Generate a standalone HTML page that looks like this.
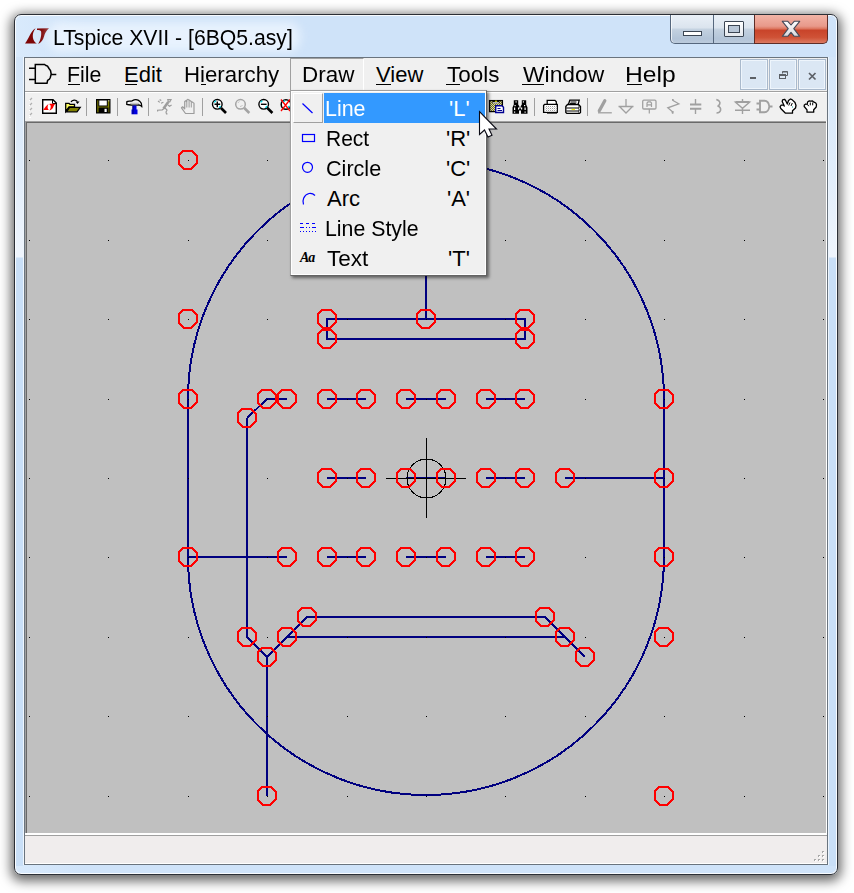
<!DOCTYPE html>
<html><head><meta charset="utf-8">
<style>
*{margin:0;padding:0;box-sizing:border-box}
html,body{width:854px;height:893px;overflow:hidden;background:#fff;font-family:"Liberation Sans",sans-serif}
.abs{position:absolute}
.t{position:absolute;font-size:22px;line-height:22px;color:#000;white-space:pre;transform-origin:0 0}
#win{position:absolute;left:14px;top:14px;width:824px;height:861px;border:1px solid #2b2f36;border-radius:7px;
 background:linear-gradient(90deg,#d9eafc 0,#cfe3f9 70px,#cfe3f9 100%);
 box-shadow:0 3px 12px 3px rgba(0,0,0,.6), inset 0 0 0 1px rgba(255,255,255,.85)}
#client{position:absolute;left:24px;top:57px;width:804px;height:808px;border:1px solid #6a747e;background:#f0f0f0}
.u{position:absolute;height:1px;background:#000}
#canvas{position:absolute;left:25px;top:121px;width:801px;height:712px;background:#c0c0c0;border-left:1px solid #a0a0a0;border-top:1px solid #a0a0a0;box-shadow:inset 1px 1px 0 #696969}
#status{position:absolute;left:25px;top:835px;width:802px;height:29px;background:#f0eded;border-top:1px solid #a0a0a0;border-bottom:1px solid #fff}
#dd{position:absolute;left:290px;top:90px;width:197px;height:185px;background:#f0f0f0;border:1px solid #979797;box-shadow:3px 3px 3px rgba(0,0,0,.35)}
</style></head><body>

<div id="win"></div>
<div class="abs" style="left:16px;top:57px;width:7px;height:809px;background:linear-gradient(#d3e5f9 0,#e2eefb 120px,#eff5fd 200px,#c9dff7 201px,#c9dff7 100%)"></div><div class="abs" style="left:829px;top:57px;width:7px;height:809px;background:linear-gradient(#d3e5f9 0,#e2eefb 120px,#eff5fd 200px,#c9dff7 201px,#c9dff7 100%)"></div><div class="abs" style="left:23px;top:57px;width:1px;height:808px;background:#fff;opacity:.6"></div><div class="abs" style="left:828px;top:57px;width:1px;height:808px;background:#fff;opacity:.6"></div>
<svg class="abs" style="left:0;top:0" width="60" height="60" viewBox="0 0 60 60">
<path d="M35.6 28.2 C30.5 31 28.5 39.5 25 43.4 L36.8 43.4 C32.5 41.5 31 34 35.6 28.2Z" fill="#7e0606"/>
<path d="M37 28.5 L49 28.2 C46.5 30.5 44.8 33 44.2 36 C43.2 40 41 42.5 38.2 43.9 C40.8 40 41.6 34.5 41.1 31.5 C40.7 30.2 39 30 37 30Z" fill="#7e0606"/>
</svg>
<div class="abs" style="left:48px;top:22px;width:252px;height:30px;background:rgba(240,247,255,.75);filter:blur(5px);border-radius:12px"></div>
<div class="t" style="left:53.1px;top:27px;transform:scaleX(0.963)">LTspice XVII - [6BQ5.asy]</div>
<div class="abs" style="left:670px;top:15px;width:85px;height:29px;border:1px solid #56677d;border-top:none;border-radius:0 0 0 5px;background:linear-gradient(#eaf0f7 0,#dbe4ee 45%,#c3d1e0 52%,#b3c4d8 85%,#bccbdc 100%);box-shadow:inset 1px 0 0 rgba(255,255,255,.7)"></div>
<div class="abs" style="left:713px;top:15px;width:1px;height:28px;background:#56677d"></div>
<div class="abs" style="left:754px;top:15px;width:74px;height:29px;border:1px solid #5e2d27;border-top:none;border-radius:0 0 5px 0;background:linear-gradient(#f2b4a6 0,#e8998a 40%,#de7a64 48%,#c9442a 55%,#cf5236 80%,#dc7a62 100%)"></div>
<div class="abs" style="left:683px;top:31px;width:19px;height:5px;background:#fff;border:1px solid #3b4553"></div>
<div class="abs" style="left:724px;top:21px;width:20px;height:16px;border:1px solid #3b4553;border-radius:1px;background:linear-gradient(#fff,#e4e8ee)"></div>
<div class="abs" style="left:728px;top:25px;width:12px;height:8px;border:1px solid #3b4553;background:#b9c7d8"></div>
<svg class="abs" style="left:770px;top:10px" width="40" height="40" viewBox="770 10 40 40"><defs><linearGradient id="xg" x1="0" y1="0" x2="0" y2="1"><stop offset="0" stop-color="#ffffff"/><stop offset="1" stop-color="#d8d8dc"/></linearGradient></defs><path d="M782.3 21.3 H787.8 L791 25 L794.2 21.3 H799.7 L793.8 28.7 L799.7 36.3 H794.2 L791 32.4 L787.8 36.3 H782.3 L788.2 28.7 Z" fill="url(#xg)" stroke="#454a58" stroke-width="1.1" stroke-linejoin="round"/></svg>
<div id="client"></div>
<svg class="abs" style="left:0;top:50px" width="60" height="40" viewBox="0 50 60 40"><path d="M29 68.3 H35 M29 79.4 H35 M35.3 64.5 H44.5 L46 65.5 L47.5 66 L49 68.5 L50.5 70.5 L51.2 74 L50.3 77.5 L49.5 79 L47.6 80.5 L47 83.3 H35.3 Z M51.2 74.5 H56.3" fill="#f0f0f0" stroke="#000" stroke-width="1.5"/></svg>
<div class="abs" style="left:290px;top:58px;width:74px;height:33px;border-left:1px solid #a0a0a0;border-top:1px solid #a0a0a0;border-right:1px solid #fff"></div>
<div class="t" style="left:67.1px;top:64px;transform:scaleX(0.970)">File</div>
<div class="u" style="left:68px;top:84px;width:12px"></div>
<div class="t" style="left:124px;top:64px;transform:scaleX(1.0)">Edit</div>
<div class="u" style="left:125px;top:84px;width:12px"></div>
<div class="t" style="left:184px;top:64px;transform:scaleX(1.011)">Hierarchy</div>
<div class="u" style="left:201px;top:84px;width:5px"></div>
<div class="t" style="left:302px;top:64px;transform:scaleX(1.02)">Draw</div>
<div class="t" style="left:376px;top:64px;transform:scaleX(1.0)">View</div>
<div class="u" style="left:376px;top:84px;width:15px"></div>
<div class="t" style="left:447px;top:64px;transform:scaleX(1.02)">Tools</div>
<div class="u" style="left:446px;top:84px;width:14px"></div>
<div class="t" style="left:523px;top:64px;transform:scaleX(1.038)">Window</div>
<div class="u" style="left:522px;top:84px;width:22px"></div>
<div class="t" style="left:624.8px;top:64px;transform:scaleX(1.119)">Help</div>
<div class="u" style="left:627px;top:84px;width:15px"></div>
<div class="abs" style="left:740px;top:59px;width:28px;height:31px;background:#dbe7f4;border:1px solid #a9b9cc;box-shadow:inset 1px 1px 0 #eef5fc,inset -1px -1px 0 #eef5fc"></div>
<div class="abs" style="left:769px;top:59px;width:28px;height:31px;background:#dbe7f4;border:1px solid #a9b9cc;box-shadow:inset 1px 1px 0 #eef5fc,inset -1px -1px 0 #eef5fc"></div>
<div class="abs" style="left:798px;top:59px;width:28px;height:31px;background:#dbe7f4;border:1px solid #a9b9cc;box-shadow:inset 1px 1px 0 #eef5fc,inset -1px -1px 0 #eef5fc"></div>
<div class="abs" style="left:750px;top:77px;width:6px;height:2px;background:#5c6066"></div>
<svg class="abs" style="left:778px;top:70px" width="12" height="10"><path d="M4.5 3.5V1.5H9.5V5.5H7.5" fill="none" stroke="#5c6066"/><path d="M4.5 2H9.5" stroke="#5c6066"/><rect x="1.5" y="4.5" width="6" height="4" fill="none" stroke="#5c6066"/><path d="M2 5.5H7" stroke="#5c6066"/></svg>
<svg class="abs" style="left:807px;top:71px" width="10" height="10"><path d="M2 2 L8.5 8.5 M8.5 2 L2 8.5" stroke="#5c6066" stroke-width="1.7"/></svg>
<div class="abs" style="left:25px;top:91px;width:802px;height:1px;background:#a0a0a0"></div>
<div class="abs" style="left:25px;top:92px;width:802px;height:1px;background:#fff"></div>
<svg class="abs" style="left:0;top:0" width="854" height="125" viewBox="0 0 854 125">
<g stroke="#b0b0b0" stroke-width="1.2" fill="none"><path d="M30 100 L32 98 M30 105 L32 103 M30 110 L32 108 M30 115 L32 113"/></g>
<g stroke="#fff" stroke-width="1" fill="none"><path d="M29 100.5 H30 M29 105.5 H30 M29 110.5 H30 M29 115.5 H30 M29 117.5 H31"/></g>
<!-- new doc -->
<path d="M42.7 99.7 H53 L56.3 103 V113.3 H42.7 Z" fill="#fff" stroke="#000" stroke-width="1.4"/>
<path d="M52.5 100 V103.5 H56" fill="none" stroke="#000" stroke-width="1"/>
<path d="M48.6 103.8 C46.8 105 45.2 107.5 43.2 110 H48.8 C47.3 108.8 47.2 106 48.6 103.8 Z" fill="#ff0000"/>
<path d="M49.6 103.8 H55.6 C54.2 104.8 53.6 106 53.1 107.5 C52.5 109 51.2 110 49.4 110.4 C50.6 109 51 107 50.6 105.5 C50.4 105 50.1 104.8 49.6 104.8 Z" fill="#ff0000"/>
<!-- open folder -->
<path d="M71 102 C72 99.5 76 99.5 77.5 101.5" fill="none" stroke="#000" stroke-width="1.2"/>
<path d="M75.5 101.5 H79.5 L77.5 104 Z" fill="#000"/>
<path d="M65.7 103.3 H69 L70 104.3 H74.5 V107 H69 L65.7 111.5 Z" fill="#ffff60" stroke="#000" stroke-width="1.3"/>
<path d="M66.5 111.8 L69.5 107.3 H80.2 L77 111.8 Z" fill="#808000" stroke="#000" stroke-width="1.3"/>
<!-- save -->
<rect x="96" y="99" width="14.5" height="14.5" fill="#000"/>
<rect x="97.3" y="100.3" width="12" height="12" fill="#808000"/>
<rect x="98.8" y="100" width="8.5" height="6" fill="#fff" stroke="#000" stroke-width="1"/>
<rect x="98.5" y="107.5" width="10" height="5.5" fill="#000"/>
<rect x="104.5" y="108.8" width="2.2" height="3.2" fill="#fff"/>
<rect x="108.3" y="100.3" width="1" height="1" fill="#fff"/>
<!-- separators -->
<g fill="#a0a0a0"><rect x="86" y="98" width="1" height="18"/><rect x="117" y="98" width="1" height="18"/><rect x="148" y="98" width="1" height="18"/><rect x="202" y="98" width="1" height="18"/><rect x="534" y="98" width="1" height="18"/><rect x="587" y="98" width="1" height="18"/></g>
<!-- hammer -->
<path d="M126.8 101.8 C128 100.5 130 101.5 132 100.8 C134.5 99.5 138 99.5 140 101.5 C141.8 103 142 105 141.8 106.5 C140.5 105 139 104.8 137.5 105.2 H131.5 C130 104.5 128 105 126.8 104.5 Z" fill="#f4f4f4" stroke="#000" stroke-width="1.3"/>
<path d="M130 103.3 H139" stroke="#b8b8b8" stroke-width="1"/>
<rect x="132.5" y="105.5" width="4" height="5" fill="#0000e0"/>
<rect x="131.5" y="109.5" width="6" height="4.8" fill="#0000e0"/>
<path d="M133 106 V114" stroke="#00007a" stroke-width="1"/>
<!-- running man grey -->
<g fill="none" stroke="#9c9c9c" stroke-width="1.2">
<path d="M167.8 99.6 H171 L169.8 101.8 H168.4 Z"/>
<path d="M158 101 L159.8 102.4 M159.6 99.6 L161.3 100.5 M161 103.3 L163.4 102.2"/>
<path d="M164.4 108.2 L162.3 109.8 L157.6 110.2 V111.5"/>
<path d="M165 108 L167 110.2 L166 112 L166.5 113.8 H167.5"/>
<path d="M168 105 L169.5 106.2 L171.6 105"/>
</g>
<path d="M168.3 102 L163.5 108.6" stroke="#9c9c9c" stroke-width="2.6"/>
<!-- hand grey -->
<path d="M185.5 113.5 L181.5 107.8 L182.6 106.8 L184.7 108.8 V101.5 L185.8 100.7 L186.7 101.5 V100.2 L187.7 99.4 L189.1 100 L190.2 100.8 L191.3 101.6 L192.2 102 L193 102.6 L194 103.2 V113.5 Z" fill="none" stroke="#9c9c9c" stroke-width="1.2" stroke-linejoin="round"/>
<path d="M186.8 101.5 V107.5 M189.1 100.2 V107.5 M191.3 101.6 V107.5" stroke="#9c9c9c" stroke-width="1"/>
<!-- zoom in -->
<circle cx="217.3" cy="104.3" r="4.8" fill="#fff" stroke="#000" stroke-width="1.4"/>
<path d="M214.3 102.5 A3.5 3.5 0 0 1 216 100.8 M220.5 106 A3.5 3.5 0 0 1 219 107.8" stroke="#00d8e8" stroke-width="1.3" fill="none"/>
<path d="M214.5 104.3 H220.2 M217.3 101.5 V107.2" stroke="#000" stroke-width="1.4"/>
<path d="M221 108 L226 113" stroke="#000" stroke-width="2.6"/>
<!-- zoom grey -->
<circle cx="240.5" cy="104.3" r="4.8" fill="none" stroke="#a4a4a4" stroke-width="1.5"/>
<path d="M238 103 A2.5 2.5 0 0 1 239.5 101.5 M240 106.5 A2.5 2.5 0 0 0 242.5 105" stroke="#c4c4c4" stroke-width="1" fill="none"/>
<path d="M244.3 108 L249.3 113" stroke="#a4a4a4" stroke-width="2.6"/>
<!-- zoom out -->
<circle cx="263.7" cy="104.3" r="4.8" fill="#fff" stroke="#000" stroke-width="1.4"/>
<path d="M260.7 102.5 A3.5 3.5 0 0 1 262.4 100.8 M266.9 106 A3.5 3.5 0 0 1 265.4 107.8" stroke="#00d8e8" stroke-width="1.3" fill="none"/>
<path d="M260.9 104.3 H266.6" stroke="#000" stroke-width="1.4"/>
<path d="M267.4 108 L272.4 113" stroke="#000" stroke-width="2.6"/>
<!-- zoom fit -->
<circle cx="286" cy="104.5" r="4.8" fill="#fff" stroke="#000" stroke-width="1.5"/><path d="M283 102.5 A3.5 3.5 0 0 1 285 100.8 M289.2 106 A3.5 3.5 0 0 1 287.5 108" stroke="#00d8e8" stroke-width="1.6" fill="none"/>
<path d="M281 99.5 L290 111 M290 99.5 L281 111" stroke="#ff0000" stroke-width="1.3"/>
<!-- paste -->
<defs><pattern id="chk" width="2" height="2" patternUnits="userSpaceOnUse"><rect width="2" height="2" fill="#808000"/><rect width="1" height="1" fill="#c8c8c8"/><rect x="1" y="1" width="1" height="1" fill="#c8c8c8"/></pattern></defs>
<rect x="489.6" y="100.6" width="12.8" height="11" fill="url(#chk)" stroke="#000" stroke-width="1.3"/>
<path d="M492.5 103.2 H499.5 V101.8 L498 100.2 H494 L492.5 101.8 Z" fill="#000"/>
<path d="M494.5 101.8 L496 100.3 L497.5 101.8 Z" fill="#ffff00"/>
<rect x="493" y="102.3" width="6" height="1" fill="#fff"/>
<path d="M495.7 105.7 H502 L503.5 107.2 V112.5 H495.7 Z" fill="#fff" stroke="#000090" stroke-width="1.4"/>
<path d="M497.5 108.5 H500.5 M497.5 110.5 H502" stroke="#000090" stroke-width="1"/>
<!-- binoculars -->
<path d="M512.5 113.8 V107.5 L513.8 104.5 V100.3 H518.2 V104.5 L519.4 106.5 V108.5 H520.6 V106.5 L521.8 104.5 V100.3 H526.2 V104.5 L527.5 107.5 V113.8 H521 V110.5 H519 V113.8 Z" fill="#000"/>
<g fill="#fff"><rect x="515.5" y="101.3" width="1.2" height="1.2"/><rect x="522.8" y="101.3" width="1.2" height="1.2"/><rect x="514.5" y="105" width="1.2" height="1.2"/><rect x="524" y="105" width="1.2" height="1.2"/><rect x="514" y="107.5" width="1.2" height="2.5"/><rect x="518" y="107.5" width="1.2" height="2"/><rect x="521" y="107.5" width="1.2" height="2"/><rect x="524.5" y="107.5" width="1.2" height="2.5"/><rect x="514" y="111.5" width="1.2" height="1.2"/><rect x="524.5" y="111.5" width="1.2" height="1.2"/></g>
<!-- print preview -->
<path d="M547.2 104.5 V100.4 H555 L556.3 101.7 V104.5" fill="#fff" stroke="#000" stroke-width="1.3"/>
<path d="M543.6 105.5 L544.6 104.4 H557.3 V112.4 H543.6 Z" fill="#fff" stroke="#000" stroke-width="1.3"/>
<rect x="547" y="112" width="10" height="1.6" fill="#000"/>
<rect x="545" y="106" width="11.5" height="5.5" fill="url(#chk2)"/>
<defs><pattern id="chk2" width="2" height="2" patternUnits="userSpaceOnUse"><rect width="2" height="2" fill="#fff"/><rect width="1" height="1" fill="#a0a0a0"/><rect x="1" y="1" width="1" height="1" fill="#e0e0e0"/></pattern></defs>
<!-- printer -->
<path d="M568.5 104.2 L569.8 100.2 H579.2 L578.2 104.2" fill="#fff" stroke="#000" stroke-width="1.3"/>
<path d="M570.5 102 H576.5 M570 103.6 H575.8" stroke="#000" stroke-width="1"/>
<path d="M565.8 106.5 L567.5 104.5 H578.5 L580.5 106.5 V112.5 L579.5 113.3 H566.8 L565.8 112.5 Z" fill="#fff" stroke="#000" stroke-width="1.3"/>
<path d="M566.3 108 H579 M566.3 111 H579" stroke="#000" stroke-width="1.2"/>
<path d="M571.5 109.5 H575" stroke="#f0f000" stroke-width="1.2"/>
<path d="M578.5 105.5 V113 M580 107 H578.5 M580 110 H578.5" stroke="#000" stroke-width="0.8" stroke-dasharray="1 1"/>
<!-- pencil grey -->
<path d="M599.3 110.8 L604.8 100.8" stroke="#a0a0a0" stroke-width="3.3" stroke-linecap="round"/>
<path d="M598 112.8 H611.8" stroke="#a0a0a0" stroke-width="1.3"/>
<!-- ground -->
<path d="M626 99 V106.5 M618.5 106.5 H633.5 M619.5 106.5 L626 113 L632.5 106.5" fill="none" stroke="#a0a0a0" stroke-width="1.3"/>
<!-- label A -->
<rect x="642.7" y="100.2" width="13.3" height="8.8" rx="1.2" fill="none" stroke="#a0a0a0" stroke-width="1.3"/>
<path d="M647 107 V103 L648 101.8 H650.5 L651.5 103 V107 M647 104.8 H651.5 M649.3 109 V113.5" fill="none" stroke="#a0a0a0" stroke-width="1.2"/>
<!-- resistor -->
<path d="M672.5 99.5 L673.5 100.8 L678.8 103.8 L667.8 107.8 L672 111.3 L672.6 113.5" fill="none" stroke="#a0a0a0" stroke-width="1.3"/>
<rect x="672" y="111" width="1.6" height="2.5" fill="#a0a0a0"/><rect x="672" y="99" width="1.5" height="1.6" fill="#a0a0a0"/>
<!-- capacitor -->
<path d="M695.5 99 V104 M695.5 109 V114" fill="none" stroke="#a0a0a0" stroke-width="1.4"/>
<path d="M690 104.6 H701.3 M690 108.7 H701.3" fill="none" stroke="#a0a0a0" stroke-width="2"/>
<!-- inductor -->
<path d="M716.3 99.6 C718.5 100.3 721 101.8 719.5 104.5 C719 105.3 718 106 717.5 106 C719.5 106.5 721 108 720.5 110.5 C720 112 718 113 716.5 113" fill="none" stroke="#a0a0a0" stroke-width="1.6"/>
<!-- diode -->
<path d="M742.5 99 V102 M742.5 108.3 V114 M735.5 102.2 H749.5 L742.5 108.3 Z M735 110.3 H750" fill="none" stroke="#a0a0a0" stroke-width="1.4"/><path d="M735.5 102 H749.5" stroke="#a0a0a0" stroke-width="2"/>
<!-- gate -->
<path d="M756.5 103.5 H759.5 M756.5 109.5 H759.5 M760 100.8 H764.5 C767.5 100.8 769 104 769.3 106.5 C769 109 767.5 112.2 764.5 112.2 H760 Z M769.3 106.5 H772.5" fill="none" stroke="#a0a0a0" stroke-width="1.9"/>
<!-- hand black -->
<path d="M785.5 113.2 L780.8 108.5 L780 106.8 L781.2 105.2 L783.5 105 L784.3 106 L782.2 101.5 L782.6 99.8 L784.5 99.3 L785.6 100.5 L787.3 104 L788.5 100.5 L790.5 99 L792 99.6 L795 102.5 L796 105.5 L795.5 108 L792.5 110.8 V113.2 Z" fill="#fff" stroke="#000" stroke-width="1.3" stroke-linejoin="round"/>
<path d="M790 102.5 L788.7 105.5 M792.3 103 L791 106" stroke="#000" stroke-width="1"/>
<rect x="792" y="106.5" width="1" height="1" fill="#00a0a0"/>
<!-- hand small -->
<path d="M807 112.2 V109.8 L804.2 106.5 L804.3 105 L805.8 104 L807.2 104.5 L807.6 102 L809 101 L810.8 101.2 L812.5 101 L814 102.2 L815.8 103 L816.5 104.5 L816.2 107 L813.7 109.8 V112.2 Z" fill="#fff" stroke="#000" stroke-width="1.3" stroke-linejoin="round"/>
<path d="M810.3 102.5 V105.3 M812.7 102.5 V105.3 M807.8 104.7 L808.7 106.2" stroke="#000" stroke-width="1"/>
</svg>

<div id="canvas"></div>
<svg class="abs" style="left:0;top:0" width="854" height="893" viewBox="0 0 854 893">
<defs><clipPath id="cc"><rect x="27" y="123" width="799" height="710"/></clipPath></defs>
<g clip-path="url(#cc)" shape-rendering="crispEdges">
<path d="M188 399L188 557M664 399L664 557M426 319L426 160M267 399L287 399M327 399L366 399M406 399L446 399M486 399L525 399M327 478L366 478M406 478L446 478M486 478L525 478M565 478L664 478M188 557L287 557M327 557L366 557M406 557L446 557M486 557L525 557M267 399L247 418M247 418L247 637M247 637L267 657M267 657L267 796M267 657L307 617M307 617L545 617M545 617L585 657M287 637L565 637M327 319H525V339H327ZM188 399A238 238 0 0 1 664 399M188 557A238 238 0 0 0 664 557" fill="none" stroke="#000080" stroke-width="2"/>
<path d="M29 160h1v1h-1ZM29 240h1v1h-1ZM29 319h1v1h-1ZM29 399h1v1h-1ZM29 478h1v1h-1ZM29 557h1v1h-1ZM29 637h1v1h-1ZM29 716h1v1h-1ZM29 796h1v1h-1ZM108 160h1v1h-1ZM108 240h1v1h-1ZM108 319h1v1h-1ZM108 399h1v1h-1ZM108 478h1v1h-1ZM108 557h1v1h-1ZM108 637h1v1h-1ZM108 716h1v1h-1ZM108 796h1v1h-1ZM188 160h1v1h-1ZM188 240h1v1h-1ZM188 319h1v1h-1ZM188 399h1v1h-1ZM188 478h1v1h-1ZM188 557h1v1h-1ZM188 637h1v1h-1ZM188 716h1v1h-1ZM188 796h1v1h-1ZM267 160h1v1h-1ZM267 240h1v1h-1ZM267 319h1v1h-1ZM267 399h1v1h-1ZM267 478h1v1h-1ZM267 557h1v1h-1ZM267 637h1v1h-1ZM267 716h1v1h-1ZM267 796h1v1h-1ZM347 160h1v1h-1ZM347 240h1v1h-1ZM347 319h1v1h-1ZM347 399h1v1h-1ZM347 478h1v1h-1ZM347 557h1v1h-1ZM347 637h1v1h-1ZM347 716h1v1h-1ZM347 796h1v1h-1ZM426 160h1v1h-1ZM426 240h1v1h-1ZM426 319h1v1h-1ZM426 399h1v1h-1ZM426 478h1v1h-1ZM426 557h1v1h-1ZM426 637h1v1h-1ZM426 716h1v1h-1ZM426 796h1v1h-1ZM505 160h1v1h-1ZM505 240h1v1h-1ZM505 319h1v1h-1ZM505 399h1v1h-1ZM505 478h1v1h-1ZM505 557h1v1h-1ZM505 637h1v1h-1ZM505 716h1v1h-1ZM505 796h1v1h-1ZM585 160h1v1h-1ZM585 240h1v1h-1ZM585 319h1v1h-1ZM585 399h1v1h-1ZM585 478h1v1h-1ZM585 557h1v1h-1ZM585 637h1v1h-1ZM585 716h1v1h-1ZM585 796h1v1h-1ZM664 160h1v1h-1ZM664 240h1v1h-1ZM664 319h1v1h-1ZM664 399h1v1h-1ZM664 478h1v1h-1ZM664 557h1v1h-1ZM664 637h1v1h-1ZM664 716h1v1h-1ZM664 796h1v1h-1ZM744 160h1v1h-1ZM744 240h1v1h-1ZM744 319h1v1h-1ZM744 399h1v1h-1ZM744 478h1v1h-1ZM744 557h1v1h-1ZM744 637h1v1h-1ZM744 716h1v1h-1ZM744 796h1v1h-1ZM823 160h1v1h-1ZM823 240h1v1h-1ZM823 319h1v1h-1ZM823 399h1v1h-1ZM823 478h1v1h-1ZM823 557h1v1h-1ZM823 637h1v1h-1ZM823 716h1v1h-1ZM823 796h1v1h-1Z" fill="#000"/>
<path d="M426.5 438V518M386 478.5H466" stroke="#000" stroke-width="1"/><circle cx="426.5" cy="478.5" r="19.5" fill="none" stroke="#000" stroke-width="1"/>
<path d="M196.5 163.228L191.228 168.5L183.772 168.5L178.5 163.228L178.5 155.772L183.772 150.5L191.228 150.5L196.5 155.772ZM196.5 322.228L191.228 327.5L183.772 327.5L178.5 322.228L178.5 314.772L183.772 309.5L191.228 309.5L196.5 314.772ZM196.5 402.228L191.228 407.5L183.772 407.5L178.5 402.228L178.5 394.772L183.772 389.5L191.228 389.5L196.5 394.772ZM196.5 560.228L191.228 565.5L183.772 565.5L178.5 560.228L178.5 552.772L183.772 547.5L191.228 547.5L196.5 552.772ZM672.5 402.228L667.228 407.5L659.772 407.5L654.5 402.228L654.5 394.772L659.772 389.5L667.228 389.5L672.5 394.772ZM672.5 481.228L667.228 486.5L659.772 486.5L654.5 481.228L654.5 473.772L659.772 468.5L667.228 468.5L672.5 473.772ZM672.5 560.228L667.228 565.5L659.772 565.5L654.5 560.228L654.5 552.772L659.772 547.5L667.228 547.5L672.5 552.772ZM672.5 640.228L667.228 645.5L659.772 645.5L654.5 640.228L654.5 632.772L659.772 627.5L667.228 627.5L672.5 632.772ZM672.5 799.228L667.228 804.5L659.772 804.5L654.5 799.228L654.5 791.772L659.772 786.5L667.228 786.5L672.5 791.772ZM275.5 799.228L270.228 804.5L262.772 804.5L257.5 799.228L257.5 791.772L262.772 786.5L270.228 786.5L275.5 791.772ZM335.5 322.228L330.228 327.5L322.772 327.5L317.5 322.228L317.5 314.772L322.772 309.5L330.228 309.5L335.5 314.772ZM434.5 322.228L429.228 327.5L421.772 327.5L416.5 322.228L416.5 314.772L421.772 309.5L429.228 309.5L434.5 314.772ZM533.5 322.228L528.228 327.5L520.772 327.5L515.5 322.228L515.5 314.772L520.772 309.5L528.228 309.5L533.5 314.772ZM335.5 342.228L330.228 347.5L322.772 347.5L317.5 342.228L317.5 334.772L322.772 329.5L330.228 329.5L335.5 334.772ZM533.5 342.228L528.228 347.5L520.772 347.5L515.5 342.228L515.5 334.772L520.772 329.5L528.228 329.5L533.5 334.772ZM275.5 402.228L270.228 407.5L262.772 407.5L257.5 402.228L257.5 394.772L262.772 389.5L270.228 389.5L275.5 394.772ZM295.5 402.228L290.228 407.5L282.772 407.5L277.5 402.228L277.5 394.772L282.772 389.5L290.228 389.5L295.5 394.772ZM255.5 421.228L250.228 426.5L242.772 426.5L237.5 421.228L237.5 413.772L242.772 408.5L250.228 408.5L255.5 413.772ZM335.5 402.228L330.228 407.5L322.772 407.5L317.5 402.228L317.5 394.772L322.772 389.5L330.228 389.5L335.5 394.772ZM374.5 402.228L369.228 407.5L361.772 407.5L356.5 402.228L356.5 394.772L361.772 389.5L369.228 389.5L374.5 394.772ZM414.5 402.228L409.228 407.5L401.772 407.5L396.5 402.228L396.5 394.772L401.772 389.5L409.228 389.5L414.5 394.772ZM454.5 402.228L449.228 407.5L441.772 407.5L436.5 402.228L436.5 394.772L441.772 389.5L449.228 389.5L454.5 394.772ZM494.5 402.228L489.228 407.5L481.772 407.5L476.5 402.228L476.5 394.772L481.772 389.5L489.228 389.5L494.5 394.772ZM533.5 402.228L528.228 407.5L520.772 407.5L515.5 402.228L515.5 394.772L520.772 389.5L528.228 389.5L533.5 394.772ZM335.5 481.228L330.228 486.5L322.772 486.5L317.5 481.228L317.5 473.772L322.772 468.5L330.228 468.5L335.5 473.772ZM374.5 481.228L369.228 486.5L361.772 486.5L356.5 481.228L356.5 473.772L361.772 468.5L369.228 468.5L374.5 473.772ZM414.5 481.228L409.228 486.5L401.772 486.5L396.5 481.228L396.5 473.772L401.772 468.5L409.228 468.5L414.5 473.772ZM454.5 481.228L449.228 486.5L441.772 486.5L436.5 481.228L436.5 473.772L441.772 468.5L449.228 468.5L454.5 473.772ZM494.5 481.228L489.228 486.5L481.772 486.5L476.5 481.228L476.5 473.772L481.772 468.5L489.228 468.5L494.5 473.772ZM533.5 481.228L528.228 486.5L520.772 486.5L515.5 481.228L515.5 473.772L520.772 468.5L528.228 468.5L533.5 473.772ZM573.5 481.228L568.228 486.5L560.772 486.5L555.5 481.228L555.5 473.772L560.772 468.5L568.228 468.5L573.5 473.772ZM295.5 560.228L290.228 565.5L282.772 565.5L277.5 560.228L277.5 552.772L282.772 547.5L290.228 547.5L295.5 552.772ZM335.5 560.228L330.228 565.5L322.772 565.5L317.5 560.228L317.5 552.772L322.772 547.5L330.228 547.5L335.5 552.772ZM374.5 560.228L369.228 565.5L361.772 565.5L356.5 560.228L356.5 552.772L361.772 547.5L369.228 547.5L374.5 552.772ZM414.5 560.228L409.228 565.5L401.772 565.5L396.5 560.228L396.5 552.772L401.772 547.5L409.228 547.5L414.5 552.772ZM454.5 560.228L449.228 565.5L441.772 565.5L436.5 560.228L436.5 552.772L441.772 547.5L449.228 547.5L454.5 552.772ZM494.5 560.228L489.228 565.5L481.772 565.5L476.5 560.228L476.5 552.772L481.772 547.5L489.228 547.5L494.5 552.772ZM533.5 560.228L528.228 565.5L520.772 565.5L515.5 560.228L515.5 552.772L520.772 547.5L528.228 547.5L533.5 552.772ZM255.5 640.228L250.228 645.5L242.772 645.5L237.5 640.228L237.5 632.772L242.772 627.5L250.228 627.5L255.5 632.772ZM295.5 640.228L290.228 645.5L282.772 645.5L277.5 640.228L277.5 632.772L282.772 627.5L290.228 627.5L295.5 632.772ZM275.5 660.228L270.228 665.5L262.772 665.5L257.5 660.228L257.5 652.772L262.772 647.5L270.228 647.5L275.5 652.772ZM315.5 620.228L310.228 625.5L302.772 625.5L297.5 620.228L297.5 612.772L302.772 607.5L310.228 607.5L315.5 612.772ZM553.5 620.228L548.228 625.5L540.772 625.5L535.5 620.228L535.5 612.772L540.772 607.5L548.228 607.5L553.5 612.772ZM573.5 640.228L568.228 645.5L560.772 645.5L555.5 640.228L555.5 632.772L560.772 627.5L568.228 627.5L573.5 632.772ZM593.5 660.228L588.228 665.5L580.772 665.5L575.5 660.228L575.5 652.772L580.772 647.5L588.228 647.5L593.5 652.772Z" fill="none" stroke="#ff0000" stroke-width="2"/>
</g></svg>
<div id="status"></div>
<div class="abs" style="left:25px;top:833px;width:802px;height:2px;background:#fff"></div><div class="abs" style="left:826px;top:121px;width:1px;height:714px;background:#fff"></div>
<svg class="abs" style="left:810px;top:848px" width="16" height="16" viewBox="810 848 16 16">
<g fill="#a8a8a8"><rect x="822" y="851" width="2" height="2"/><rect x="818" y="855" width="2" height="2"/><rect x="822" y="855" width="2" height="2"/><rect x="814" y="859" width="2" height="2"/><rect x="818" y="859" width="2" height="2"/><rect x="822" y="859" width="2" height="2"/></g>
<g fill="#fff"><rect x="823" y="852" width="1.5" height="1.5"/><rect x="819" y="856" width="1.5" height="1.5"/><rect x="823" y="856" width="1.5" height="1.5"/><rect x="815" y="860" width="1.5" height="1.5"/><rect x="819" y="860" width="1.5" height="1.5"/><rect x="823" y="860" width="1.5" height="1.5"/></g>
</svg>

<div class="abs" style="left:290px;top:90px;width:197px;height:186px;background:#f0f0f0;border-left:1px solid #a0a0a0;border-top:1px solid #a0a0a0;border-right:1px solid #646464;border-bottom:1px solid #646464;box-shadow:inset 1px 1px 0 #fff,inset -1px -1px 0 #fff,2px 2px 3px 0 rgba(0,0,0,.5)"></div>
<div class="abs" style="left:293px;top:93px;width:30px;height:30px;border-left:1px solid #fff;border-top:1px solid #fff;border-right:1px solid #a0a0a0;border-bottom:1px solid #a0a0a0"></div>
<div class="abs" style="left:324px;top:93px;width:161px;height:30px;background:#3399ff"></div>
<div class="t" style="left:325.1px;top:98px;transform:scaleX(0.974);color:#fff">Line</div>
<div class="t" style="left:449px;top:98px;color:#fff">'L'</div>
<div class="t" style="left:326.1px;top:128px;transform:scaleX(0.953);color:#000">Rect</div>
<div class="t" style="left:446px;top:128px;color:#000">'R'</div>
<div class="t" style="left:326px;top:158px;transform:scaleX(0.981);color:#000">Circle</div>
<div class="t" style="left:446px;top:158px;color:#000">'C'</div>
<div class="t" style="left:327px;top:188px;transform:scaleX(1.0);color:#000">Arc</div>
<div class="t" style="left:447px;top:188px;color:#000">'A'</div>
<div class="t" style="left:325.1px;top:218px;transform:scaleX(0.968);color:#000">Line Style</div>
<div class="t" style="left:327px;top:248px;transform:scaleX(1.025);color:#000">Text</div>
<div class="t" style="left:448px;top:248px;color:#000">'T'</div>
<svg class="abs" style="left:0;top:0" width="500" height="280" viewBox="0 0 500 280">
<path d="M302.5 103.5 L312.5 113" stroke="#0000ff" stroke-width="1.2"/>
<rect x="302.5" y="134.5" width="12" height="7" fill="none" stroke="#0000ff" stroke-width="1.2"/>
<circle cx="307.5" cy="167.3" r="5" fill="none" stroke="#0000ff" stroke-width="1.2"/>
<path d="M303.5 204.5 C302 201 303.5 195 309 193.5 C311.5 193 313.5 194 315 195.5" fill="none" stroke="#0000ff" stroke-width="1.2"/>
<g fill="#0000ff"><rect x="300" y="223" width="3" height="1"/><rect x="306" y="223" width="3" height="1"/><rect x="312" y="223" width="3" height="1"/><rect x="300" y="227" width="4" height="1"/><rect x="306" y="227" width="1" height="1"/><rect x="309" y="227" width="1" height="1"/><rect x="312" y="227" width="4" height="1"/><rect x="300" y="231" width="1" height="1"/><rect x="303" y="231" width="1" height="1"/><rect x="306" y="231" width="1" height="1"/><rect x="309" y="231" width="1" height="1"/><rect x="312" y="231" width="1" height="1"/><rect x="315" y="231" width="1" height="1"/></g>
</svg>
<div class="abs" style="left:300px;top:249px;font-family:'Liberation Serif',serif;font-style:italic;font-weight:bold;font-size:14px;line-height:18px;letter-spacing:-1px">Aa</div>
<svg class="abs" style="left:470px;top:105px" width="35" height="40" viewBox="470 105 35 40"><path d="M479.5 111.5 V134.5 L484.5 130 L488 137 L492 135.3 L489 129 H496.5 Z" fill="#fff" stroke="#0a0a14" stroke-width="1.1" stroke-linejoin="miter"/></svg>

</body></html>
